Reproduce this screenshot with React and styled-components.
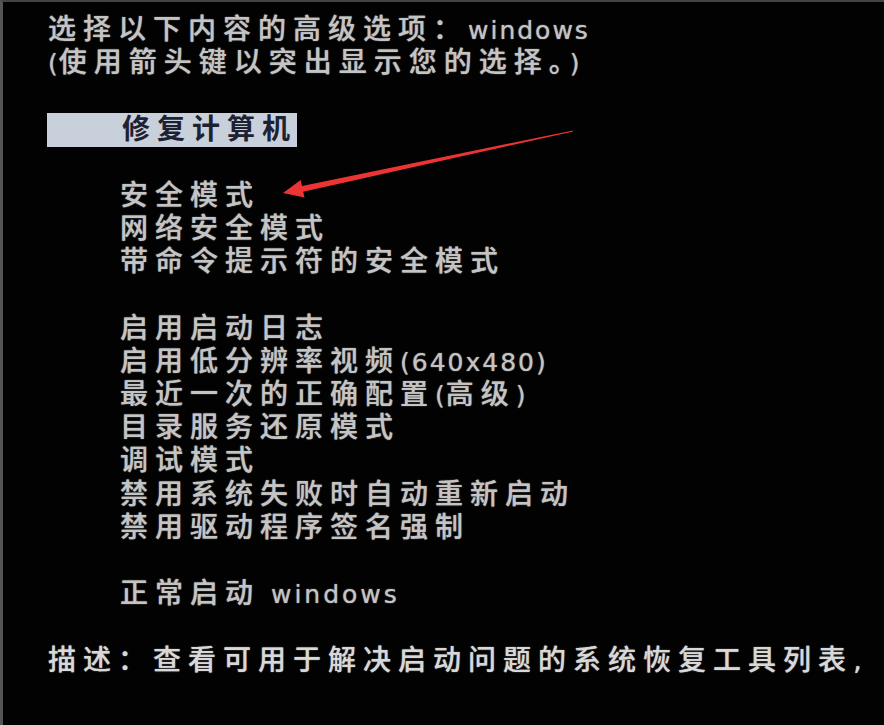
import styled, { createGlobalStyle } from "styled-components";

const Global = createGlobalStyle`
    html, body {
        margin: 0;
        padding: 0;
        background: #000;
    }
`;

const Screen = styled.div`
    position: relative;
    width: 884px;
    height: 725px;
    box-sizing: border-box;
    overflow: hidden;
    background: #020202;
    border-left: 3px solid #555;
    border-top: 2px solid #444;
    padding: 11px 0 0 45px;
    font-family: "DejaVu Sans", "Noto Sans CJK SC", sans-serif;
    font-size: 28px;
    font-weight: 500;
    letter-spacing: 7px;
    color: #c4c4c4;
    text-shadow: 0 0 1px rgba(255, 255, 255, 0.5), 0 0 2px rgba(255, 255, 255, 0.2);
    white-space: nowrap;
`;

const Line = styled.div`
    height: 33.2px;
    line-height: 33.2px;
    padding-left: ${(p) => (p.$indent ? "72px" : "0")};
    color: ${(p) => (p.$bright ? "#d8d8d8" : "inherit")};
`;

const Blank = styled.div`
    height: 33.2px;
`;

const Latin = styled.span`
    font-size: 25px;
    font-weight: 400;
    letter-spacing: ${(p) => p.$gap || "2px"};
`;

const Selected = styled.span`
    display: inline-block;
    margin-left: -1px;
    height: 34px;
    line-height: 34px;
    padding-left: 75px;
    padding-right: 0;
    margin-top: -2px;
    background: #c8d0dc;
    color: #1c2232;
    font-weight: 700;
    text-shadow: none;
`;

const Overlay = styled.svg`
    position: absolute;
    left: -3px;
    top: -2px;
    pointer-events: none;
`;

function Arrow() {
    return (
        <Overlay width="884" height="725" viewBox="0 0 884 725">
            <polygon
                points="283,193 300.7,180 302,185.9 572.9,130.5 573.1,131.5 303.2,191.7 304.5,197.6"
                fill="#ec3434"
            />
        </Overlay>
    );
}

export default function App() {
    return (
        <>
            <Global />
            <Screen>
                <Line>选择以下内容的高级选项：<Latin>windows</Latin></Line>
                <Line><Latin $gap="1px">(</Latin>使用箭头键以突出显示您的选择。<Latin $gap="1px">)</Latin></Line>
                <Blank />
                <Line><Selected>修复计算机</Selected></Line>
                <Blank />
                <Line $indent>安全模式</Line>
                <Line $indent>网络安全模式</Line>
                <Line $indent>带命令提示符的安全模式</Line>
                <Blank />
                <Line $indent>启用启动日志</Line>
                <Line $indent>启用低分辨率视频<Latin $gap="2px">(640x480)</Latin></Line>
                <Line $indent>最近一次的正确配置<Latin $gap="1px">(</Latin>高级<Latin $gap="1px">)</Latin></Line>
                <Line $indent>目录服务还原模式</Line>
                <Line $indent>调试模式</Line>
                <Line $indent>禁用系统失败时自动重新启动</Line>
                <Line $indent>禁用驱动程序签名强制</Line>
                <Blank />
                <Line $indent>正常启动<Latin $gap="3px"> windows</Latin></Line>
                <Blank />
                <Line $bright>描述：查看可用于解决启动问题的系统恢复工具列表,</Line>
                <Arrow />
            </Screen>
        </>
    );
}
